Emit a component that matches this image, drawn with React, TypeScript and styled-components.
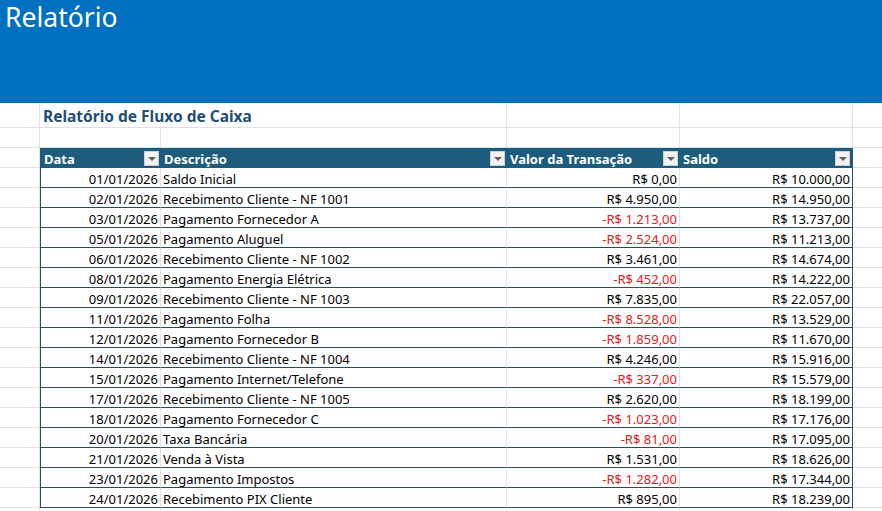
import styled, { createGlobalStyle } from 'styled-components';

const GlobalStyle = createGlobalStyle`
  html, body {
    margin: 0;
    padding: 0;
    background: #ffffff;
  }
  body {
    font-family: 'Noto Sans', 'Open Sans', sans-serif;
    overflow: hidden;
  }
`;

const COLUMNS = '40px 121px 346px 173px 173px 1fr';

const Page = styled.div`
  width: 882px;
  height: 511px;
  overflow: hidden;
  background: #ffffff;
`;

const Banner = styled.header`
  height: 103px;
  background: #0070c0;
  color: #ffffff;
  font-size: 26.5px;
  line-height: 34px;
  padding-left: 5px;
  box-sizing: border-box;
`;

const Sheet = styled.div`
  display: grid;
  grid-template-columns: ${COLUMNS};
`;

const Row = styled.div<{ $height?: number }>`
  display: contents;
  & > * {
    height: ${(p) => p.$height ?? 20}px;
  }
`;

const Cell = styled.div<{ $align?: 'left' | 'right'; $noRight?: boolean }>`
  box-sizing: border-box;
  border-right: ${(p) => (p.$noRight ? 'none' : '1px solid #e1e1e1')};
  border-bottom: 1px solid #e1e1e1;
  font-size: 13px;
  line-height: 19px;
  color: #000000;
  padding: 1.5px 2px 0 2px;
  text-align: ${(p) => p.$align ?? 'left'};
  white-space: nowrap;
  overflow: visible;
`;

const TitleCell = styled(Cell)`
  grid-column: span 2;
  font-size: 15.5px;
  font-weight: 700;
  color: #1f4e79;
  line-height: 26px;
  padding: 0 2px 0 3px;
`;

const HeadCell = styled.div<{ $first?: boolean; $last?: boolean }>`
  box-sizing: border-box;
  display: flex;
  align-items: center;
  justify-content: space-between;
  background: #1d5c7c;
  color: #ffffff;
  font-weight: 700;
  font-size: 13px;
  padding: 0 2px 0 3px;
  border-left: ${(p) => (p.$first ? '1px solid #1d5c7c' : 'none')};
  border-right: ${(p) => (p.$last ? '1px solid #1d5c7c' : 'none')};
`;

const HeadLabel = styled.span`
  padding-top: 2px;
  white-space: nowrap;
`;

const FilterButton = styled.span`
  width: 15px;
  height: 15px;
  margin-top: 1px;
  box-sizing: border-box;
  background: #f2f2f2;
  border: 1px solid #d0d0d0;
  display: flex;
  align-items: center;
  justify-content: center;
  &::after {
    content: '';
    border-left: 4px solid transparent;
    border-right: 4px solid transparent;
    border-top: 4px solid #606060;
    margin-top: 1px;
  }
`;

const DataCell = styled(Cell)<{ $first?: boolean; $last?: boolean; $negative?: boolean }>`
  border-bottom: 1px solid #1e4f64;
  border-left: ${(p) => (p.$first ? '1px solid #1e4f64' : 'none')};
  border-right: ${(p) => (p.$last ? '1px solid #1e4f64' : '1px solid #e1e1e1')};
  color: ${(p) => (p.$negative ? '#e0201c' : '#000000')};
`;

type Entry = { date: string; desc: string; value: string; balance: string };

const entries: Entry[] = [
  { date: '01/01/2026', desc: 'Saldo Inicial', value: 'R$ 0,00', balance: 'R$ 10.000,00' },
  { date: '02/01/2026', desc: 'Recebimento Cliente - NF 1001', value: 'R$ 4.950,00', balance: 'R$ 14.950,00' },
  { date: '03/01/2026', desc: 'Pagamento Fornecedor A', value: '-R$ 1.213,00', balance: 'R$ 13.737,00' },
  { date: '05/01/2026', desc: 'Pagamento Aluguel', value: '-R$ 2.524,00', balance: 'R$ 11.213,00' },
  { date: '06/01/2026', desc: 'Recebimento Cliente - NF 1002', value: 'R$ 3.461,00', balance: 'R$ 14.674,00' },
  { date: '08/01/2026', desc: 'Pagamento Energia Elétrica', value: '-R$ 452,00', balance: 'R$ 14.222,00' },
  { date: '09/01/2026', desc: 'Recebimento Cliente - NF 1003', value: 'R$ 7.835,00', balance: 'R$ 22.057,00' },
  { date: '11/01/2026', desc: 'Pagamento Folha', value: '-R$ 8.528,00', balance: 'R$ 13.529,00' },
  { date: '12/01/2026', desc: 'Pagamento Fornecedor B', value: '-R$ 1.859,00', balance: 'R$ 11.670,00' },
  { date: '14/01/2026', desc: 'Recebimento Cliente - NF 1004', value: 'R$ 4.246,00', balance: 'R$ 15.916,00' },
  { date: '15/01/2026', desc: 'Pagamento Internet/Telefone', value: '-R$ 337,00', balance: 'R$ 15.579,00' },
  { date: '17/01/2026', desc: 'Recebimento Cliente - NF 1005', value: 'R$ 2.620,00', balance: 'R$ 18.199,00' },
  { date: '18/01/2026', desc: 'Pagamento Fornecedor C', value: '-R$ 1.023,00', balance: 'R$ 17.176,00' },
  { date: '20/01/2026', desc: 'Taxa Bancária', value: '-R$ 81,00', balance: 'R$ 17.095,00' },
  { date: '21/01/2026', desc: 'Venda à Vista', value: 'R$ 1.531,00', balance: 'R$ 18.626,00' },
  { date: '23/01/2026', desc: 'Pagamento Impostos', value: '-R$ 1.282,00', balance: 'R$ 17.344,00' },
  { date: '24/01/2026', desc: 'Recebimento PIX Cliente', value: 'R$ 895,00', balance: 'R$ 18.239,00' },
];

const headers = ['Data', 'Descrição', 'Valor da Transação', 'Saldo'];

export default function App() {
  return (
    <Page>
      <GlobalStyle />
      <Banner>Relatório</Banner>
      <Sheet>
        <Row $height={25}>
          <Cell />
          <TitleCell>Relatório de Fluxo de Caixa</TitleCell>
          <Cell />
          <Cell />
          <Cell $noRight />
        </Row>
        <Row>
          <Cell />
          <Cell />
          <Cell />
          <Cell />
          <Cell />
          <Cell $noRight />
        </Row>
        <Row>
          <Cell />
          {headers.map((h, i) => (
            <HeadCell key={h} $first={i === 0} $last={i === headers.length - 1}>
              <HeadLabel>{h}</HeadLabel>
              <FilterButton />
            </HeadCell>
          ))}
          <Cell $noRight />
        </Row>
        {entries.map((e) => {
          const negative = e.value.startsWith('-');
          return (
            <Row key={e.date}>
              <Cell />
              <DataCell $first $align="right">
                {e.date}
              </DataCell>
              <DataCell>{e.desc}</DataCell>
              <DataCell $align="right" $negative={negative}>
                {e.value}
              </DataCell>
              <DataCell $align="right" $last>
                {e.balance}
              </DataCell>
              <Cell $noRight />
            </Row>
          );
        })}
        <Row>
          <Cell />
          <Cell />
          <Cell />
          <Cell />
          <Cell />
          <Cell $noRight />
        </Row>
      </Sheet>
    </Page>
  );
}
